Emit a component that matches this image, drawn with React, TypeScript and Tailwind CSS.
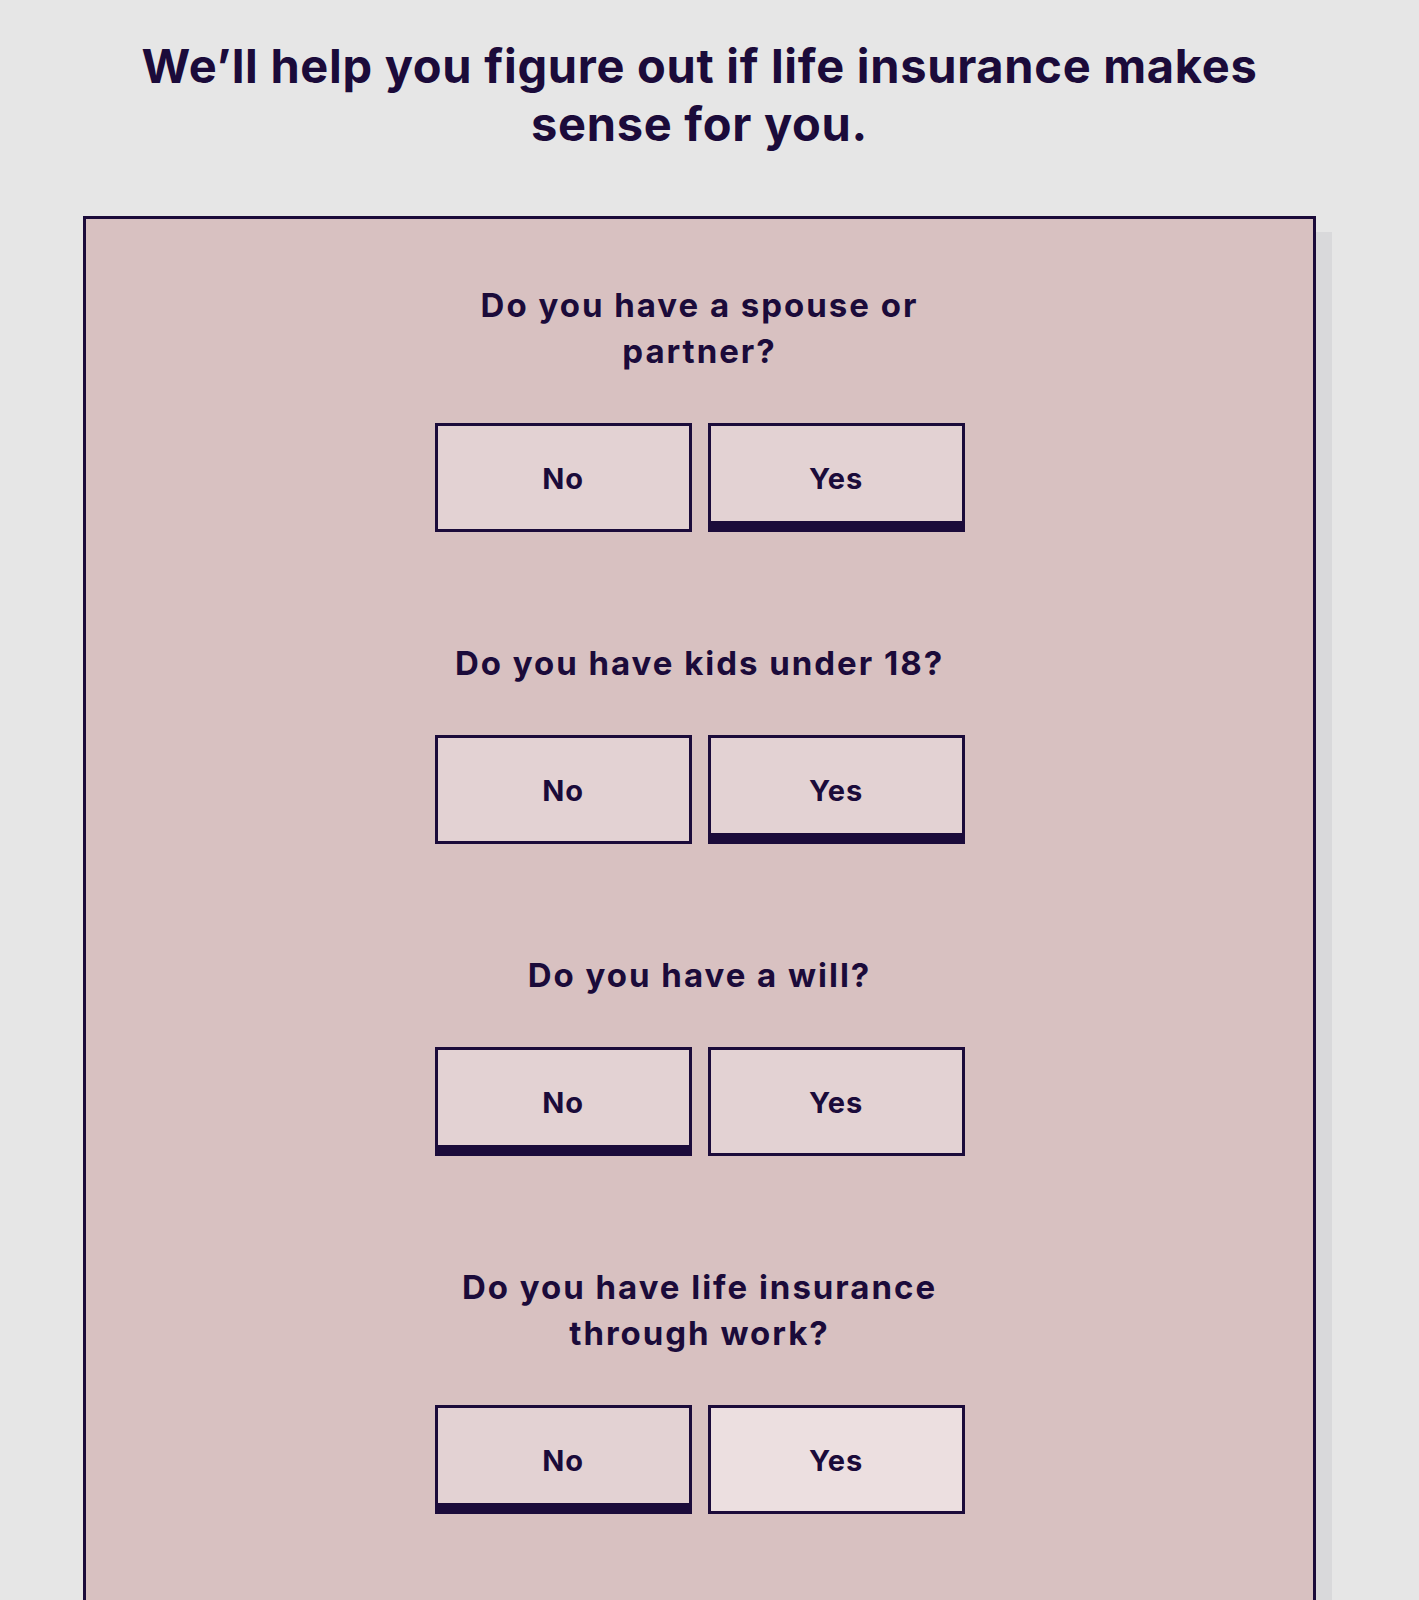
import { useState } from "react";

type Question = {
  id: string;
  text: string;
  answer: "no" | "yes";
};

const questions: Question[] = [
  { id: "spouse", text: "Do you have a spouse or partner?", answer: "yes" },
  { id: "kids", text: "Do you have kids under 18?", answer: "yes" },
  { id: "will", text: "Do you have a will?", answer: "no" },
  { id: "work", text: "Do you have life insurance through work?", answer: "no" },
];

function AnswerButton({
  label,
  selected,
  hovered,
  onClick,
}: {
  label: string;
  selected: boolean;
  hovered?: boolean;
  onClick: () => void;
}) {
  return (
    <button
      type="button"
      onClick={onClick}
      className={`flex h-[109px] w-[257px] items-center justify-center border-[3px] border-[#1b0b3a] pt-[2px] text-[29px] font-bold tracking-[0.03em] text-[#1b0b3a] ${
        hovered ? "bg-[#ecdfe0]" : "bg-[#e3d2d3]"
      } ${selected ? "shadow-[inset_0_-8px_0_#1b0b3a]" : ""}`}
    >
      {label}
    </button>
  );
}

export default function App() {
  const [answers, setAnswers] = useState<Record<string, "no" | "yes">>(
    Object.fromEntries(questions.map((q) => [q.id, q.answer]))
  );

  return (
    <div
      className="min-h-[1600px] bg-[#e6e6e6] text-[#1b0b3a]"
      style={{ fontFamily: "Inter, 'Noto Sans', sans-serif" }}
    >
      <div className="pl-[83px] pr-[103px] pt-[37px]">
        <h1 className="mx-auto max-w-[1180px] text-center text-[47px] font-bold leading-[58px] tracking-[0.015em]">
          We’ll help you figure out if life insurance makes sense for you.
        </h1>

        <div className="mt-[63px] border-[3px] border-[#1b0b3a] bg-[#d8c1c1] pt-[63px] pb-[120px] shadow-[16px_16px_0_#d9d9db]">
          {questions.map((q, i) => (
            <div
              key={q.id}
              className={`flex flex-col items-center ${i > 0 ? "mt-[108px]" : ""}`}
            >
              <h2 className="max-w-[540px] text-center text-[33px] font-bold leading-[46px] tracking-[0.06em]">
                {q.text}
              </h2>
              <div className="mt-[49px] flex gap-[16px]">
                <AnswerButton
                  label="No"
                  selected={answers[q.id] === "no"}
                  onClick={() => setAnswers({ ...answers, [q.id]: "no" })}
                />
                <AnswerButton
                  label="Yes"
                  selected={answers[q.id] === "yes"}
                  hovered={q.id === "work"}
                  onClick={() => setAnswers({ ...answers, [q.id]: "yes" })}
                />
              </div>
            </div>
          ))}
        </div>
      </div>
    </div>
  );
}
